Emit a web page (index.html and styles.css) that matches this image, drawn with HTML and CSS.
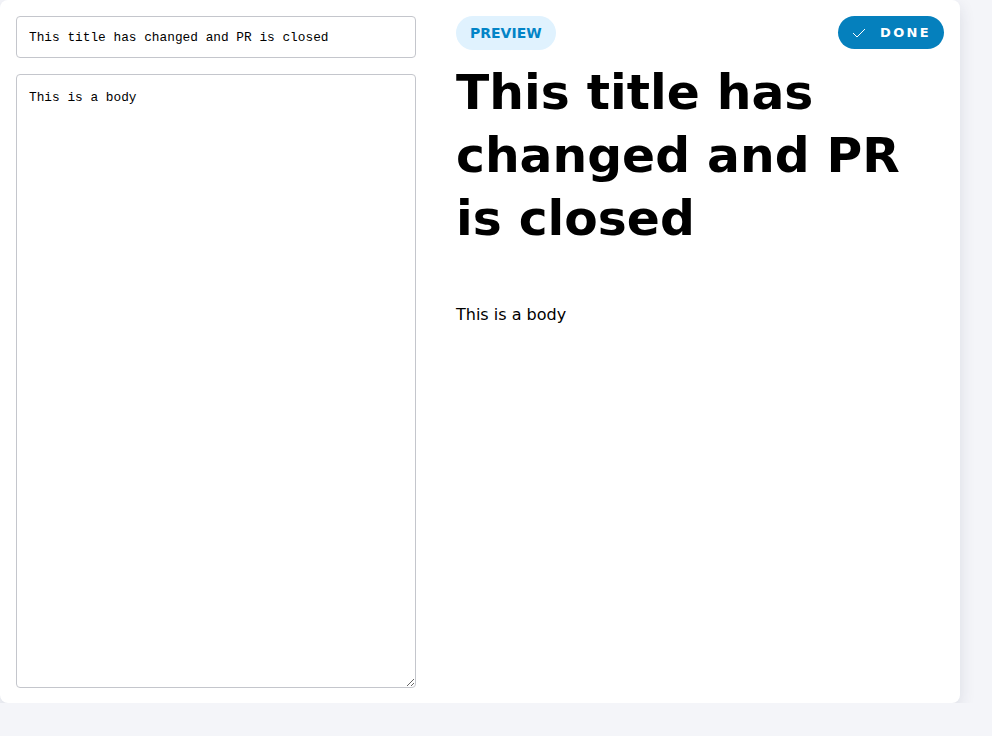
FILE: index.html
```html
<!DOCTYPE html>
<html>
<head>
<meta charset="utf-8">
<link rel="stylesheet" href="styles.css">
</head>
<body>
<div class="card">
  <div class="editor">
    <input class="title-input" type="text" value="This title has changed and PR is closed">
    <textarea class="body-input">This is a body</textarea>
  </div>
  <div class="preview">
    <div class="toolbar">
      <span class="pill">Preview</span>
      <button class="done">
        <svg width="14" height="10" viewBox="0 0 14 10"><path d="M1 5 L5 9 L13 1" fill="none" stroke="#fff" stroke-width="1"/></svg>
        <span>Done</span>
      </button>
    </div>
    <h1 class="title">This title has changed and PR is closed</h1>
    <p class="body-text">This is a body</p>
  </div>
</div>
</body>
</html>
```
FILE: styles.css
```css
html, body {
  margin: 0;
  padding: 0;
  background: #f4f5f9;
  font-family: "DejaVu Sans", sans-serif;
}
.card {
  width: 960px;
  height: 703px;
  box-sizing: border-box;
  background: #fff;
  border-radius: 8px;
  box-shadow: 0 6px 16px rgba(30, 40, 70, 0.12);
  padding: 16px 16px 15px;
  display: grid;
  grid-template-columns: 400px 1fr;
  column-gap: 40px;
}
.editor {
  display: flex;
  flex-direction: column;
  gap: 16px;
}
.title-input, .body-input {
  font-family: "Liberation Mono", monospace;
  font-size: 12.8px;
  color: #000;
  border: 1px solid #c4c6cc;
  border-radius: 4px;
  padding: 0 12px;
  box-sizing: border-box;
  width: 400px;
  outline: none;
}
.title-input {
  height: 42px;
}
.body-input {
  flex: 1;
  padding: 15px 12px;
  resize: both;
}
.preview {
  display: flex;
  flex-direction: column;
}
.toolbar {
  display: flex;
  justify-content: space-between;
  align-items: flex-start;
}
.pill {
  background: #e0f2fe;
  color: #0284c7;
  font-weight: bold;
  font-size: 14px;
  text-transform: uppercase;
  height: 34px;
  line-height: 34px;
  padding: 0 14px;
  border-radius: 17px;
}
.done {
  background: #0580bd;
  color: #fff;
  border: none;
  font-family: "DejaVu Sans", sans-serif;
  font-weight: bold;
  font-size: 13px;
  text-transform: uppercase;
  letter-spacing: 0.18em;
  height: 33px;
  padding: 0 13px 0 14px;
  border-radius: 17px;
  display: flex;
  align-items: center;
  gap: 14px;
}
.title {
  font-size: 48.75px;
  line-height: 63px;
  font-weight: bold;
  margin: 11px 0 0;
  color: #000;
}
.body-text {
  font-size: 16px;
  margin: 55px 0 0;
  color: #000;
}
```
